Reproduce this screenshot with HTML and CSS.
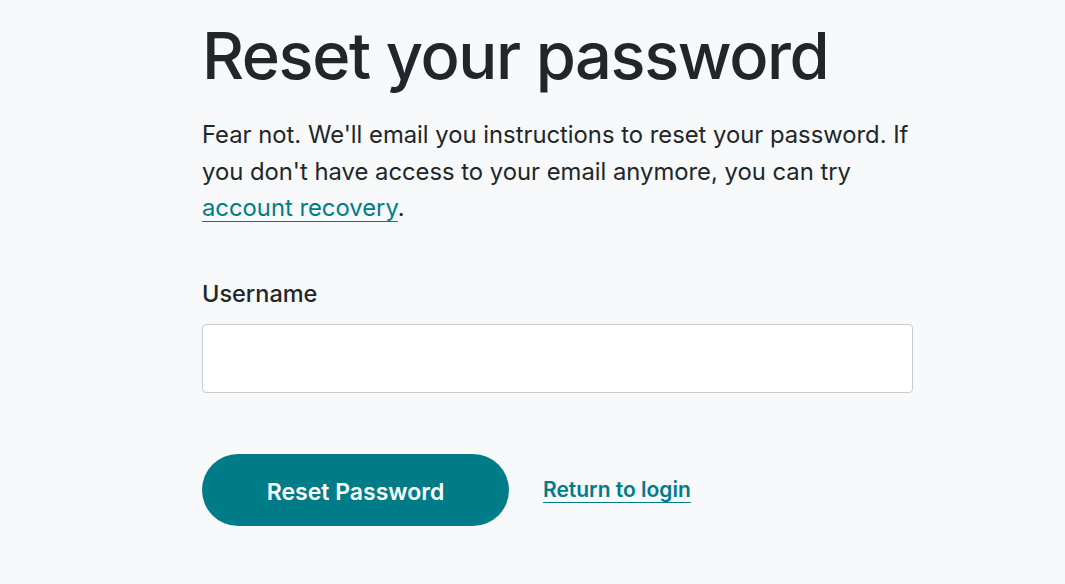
FILE: index.html
```html
<!DOCTYPE html>
<html lang="en">
<head>
<meta charset="utf-8">
<title>Reset your password</title>
<link rel="stylesheet" href="styles.css">
</head>
<body>
<main class="page">
  <h1 class="title">Reset your password</h1>
  <p class="intro">Fear not. We'll email you instructions to reset your password. If you don't have access to your email anymore, you can try <a href="#" class="link">account recovery</a>.</p>
  <form class="form">
    <label class="label" for="username">Username</label>
    <input class="input" id="username" type="text">
    <div class="actions">
      <button class="btn" type="button">Reset Password</button>
      <a href="#" class="return">Return to login</a>
    </div>
  </form>
</main>
</body>
</html>
```
FILE: styles.css
```css
html, body {
  margin: 0;
  padding: 0;
  background: #f8f9fa;
}
body {
  font-family: Inter, "Open Sans", sans-serif;
  color: #21262a;
}
.page {
  width: 711px;
  margin-left: 202px;
  padding-top: 14px;
}
.title {
  margin: 0;
  font-size: 65px;
  font-weight: 500;
  line-height: 84px;
  letter-spacing: -1.4px;
  color: #21262a;
}
.intro {
  margin: 19px 0 0;
  font-size: 23.8px;
  line-height: 36.5px;
  font-weight: 400;
  width: 711px;
}
.link {
  color: #007c89;
  text-decoration: underline;
  text-underline-offset: 5px;
  text-decoration-thickness: 1px;
}
.form {
  display: flex;
  flex-direction: column;
  margin-top: 52px;
}
.label {
  font-size: 23.5px;
  font-weight: 500;
  line-height: 30px;
}
.input {
  margin-top: 15px;
  box-sizing: border-box;
  width: 711px;
  height: 69px;
  background: #fff;
  border: 1px solid #c5ccd3;
  border-radius: 4px;
  font-size: 20px;
  padding: 0 16px;
}
.actions {
  display: flex;
  align-items: center;
  gap: 34px;
  margin-top: 61px;
}
.btn {
  width: 307px;
  height: 72px;
  border: none;
  border-radius: 36px;
  background: #007c89;
  color: #fff;
  font-family: Inter, "Open Sans", sans-serif;
  font-size: 23px;
  font-weight: 600;
  padding: 4px 0 0;
}
.return {
  color: #007c89;
  font-size: 21px;
  font-weight: 600;
  text-decoration: underline;
  text-underline-offset: 5px;
  text-decoration-thickness: 1px;
}
```
